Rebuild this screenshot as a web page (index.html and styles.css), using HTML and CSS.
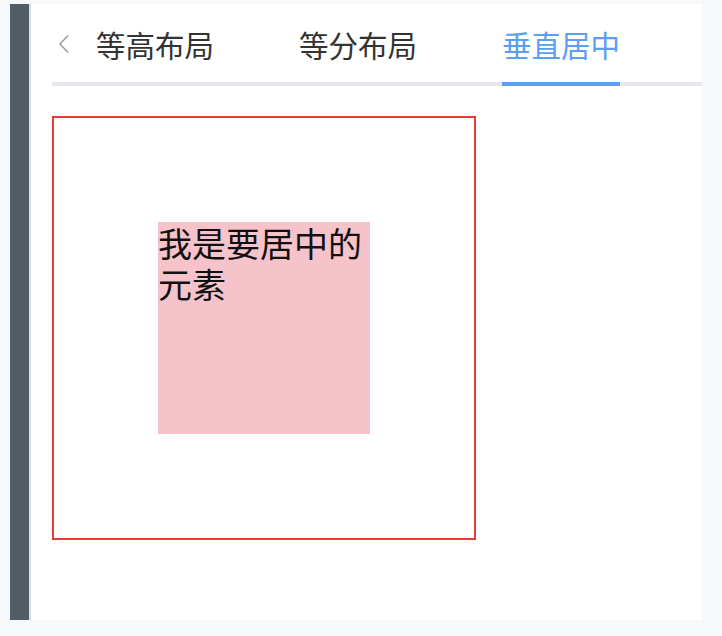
FILE: index.html
```html
<!DOCTYPE html>
<html lang="zh-CN">
<head>
    <meta charset="UTF-8">
    <meta name="viewport" content="width=device-width, initial-scale=1.0">
    <title>垂直居中</title>
    <link rel="stylesheet" href="styles.css">
</head>
<body>
    <div class="frame">
        <div class="sidebar"></div>
        <div class="main">
            <div class="tabs">
                <span class="back">
                    <svg width="12" height="20" viewBox="0 0 12 20">
                        <polyline points="10,1.5 2,10 10,18.5" fill="none" stroke="#9a9a9a" stroke-width="1.4"/>
                    </svg>
                </span>
                <span class="tab">等高布局</span>
                <span class="tab">等分布局</span>
                <span class="tab active">垂直居中</span>
            </div>
            <!-- 垂直居中示例 -->
            <div class="outer">
                <div class="inner">我是要居中的元素</div>
            </div>
        </div>
    </div>
</body>
</html>
```

FILE: styles.css
```css
body {
    margin: 0;
    background-color: #f7f8fa;
    font-family: "Noto Sans CJK SC", "Noto Sans", sans-serif;
}
.frame {
    display: flex;
    width: 692px;
    height: 616px;
    padding: 4px 0 0 10px;
}
.sidebar {
    width: 19px;
    background-color: #525c66;
    border-right: 2px solid #dcdee2;
}
.main {
    flex: 1;
    background-color: #fff;
    padding-left: 21px;
}
.tabs {
    display: flex;
    align-items: stretch;
    gap: 85px;
    height: 78px;
    border-bottom: 4px solid #e6e8ee;
}
.back {
    display: flex;
    align-items: center;
    margin-left: 6px;
    margin-right: -59px;
    padding-top: 2px;
}
.tab {
    display: flex;
    align-items: center;
    flex-shrink: 0;
    white-space: nowrap;
    font-size: 29.5px;
    color: #333;
    margin-bottom: -4px;
    padding-top: 2px;
    border-bottom: 4px solid transparent;
}
.tab.active {
    color: #5b9ef2;
    border-bottom-color: #5b9ef2;
}
.outer {
    display: flex;
    align-items: center;
    justify-content: center;
    width: 420px;
    height: 420px;
    margin-top: 30px;
    border: 2px solid #ee3b2f;
}
.inner {
    width: 212px;
    height: 212px;
    background-color: #f6c3cb;
    font-size: 34px;
    line-height: 41px;
    color: #111;
}
```
